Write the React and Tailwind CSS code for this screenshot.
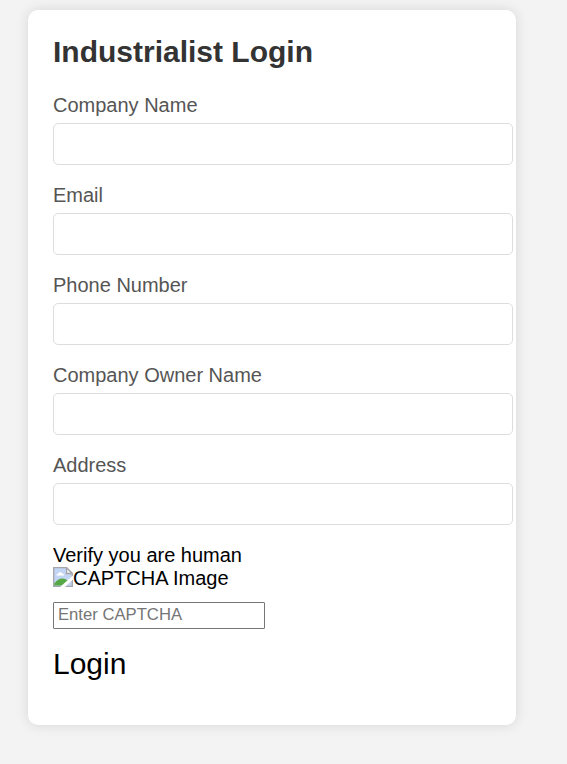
const fields = ["Company Name", "Email", "Phone Number", "Company Owner Name", "Address"];

function BrokenImage() {
  return (
    <svg className="h-5 w-5 shrink-0" viewBox="0 0 20 20">
      <path d="M.7.7h12.8l5.8 5.800v12.8H.7z" fill="#c3d5f5" stroke="#a3a5a8" strokeWidth="1.300" />
      <path d="M3.500 8.500c0-1.300 1-2 2-2 .5-1.500 3-1.700 3.600 0 1.500 0 2.200 1 2.200 2z" fill="#fff" />
      <path d="M1.400 18.600v-2c2-3.300 5-5.100 8.100-5.100 2.500 0 4.800 1.500 6 3.500l-4 3.600z" fill="#55a844" />
      <path d="M7 20 20 8.500v4L12 20z" fill="#fff" />
      <path d="M13.500.7v5.800h5.800z" fill="#f5f6f8" stroke="#a3a5a8" strokeWidth="1.300" />
    </svg>
  );
}

export default function App() {
  return (
    <div className="h-[764px] overflow-hidden bg-[#f3f3f3] pt-[10px] pl-7 font-['Liberation_Sans',Arial,sans-serif] text-xl leading-[23px]">
      <form className="h-[715px] w-[488px] rounded-[10px] bg-white pt-[25px] pl-[25px] shadow-[0_0_13px_rgba(0,0,0,0.12)]">
        <h2 className="mb-[25px] text-[30px] leading-[34px] font-bold text-[#333]">Industrialist Login</h2>
        {fields.map((name) => (
          <label key={name} className="mb-[19px] block w-[460px] text-[#555]">
            <span className="mb-[6px] block">{name}</span>
            <input className="block h-[42px] w-full rounded-[5px] border border-[#ddd] bg-white px-3" />
          </label>
        ))}
        <p className="text-black">Verify you are human</p>
        <div className="flex text-black"><BrokenImage /><span>CAPTCHA Image</span></div>
        <input placeholder="Enter CAPTCHA" className="mt-3 block h-[27px] w-[212px] rounded-[1px] border border-[#767676] px-1 pb-[2px] text-[16.67px] placeholder:text-[#757575]" />
        <button type="button" className="mt-[17px] block text-[30px] leading-9 text-black">Login</button>
      </form>
    </div>
  );
}
